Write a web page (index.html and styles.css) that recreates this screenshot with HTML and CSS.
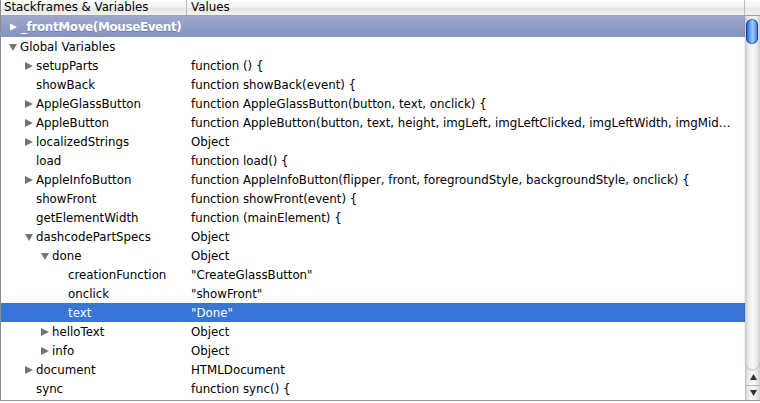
FILE: index.html
```html
<!DOCTYPE html>
<html>
<head>
<meta charset="utf-8">
<link rel="stylesheet" href="styles.css">
</head>
<body>
<div class="panel">
  <div class="header">
    <div class="hcell hname">Stackframes &amp; Variables</div>
    <div class="hcell hvalue">Values</div>
    <div class="hcell hcorner"></div>
  </div>
  <div class="body">
    <div class="list">
      <div class="frame"><svg class="ftri" viewBox="0 0 8 8"><path d="M0 0L8 4L0 8Z"/></svg>_frontMove(MouseEvent)</div>
      <div class="row l0"><span class="name"><svg class="tri" viewBox="0 0 8 8"><path d="M0 1H8L4 8Z"/></svg>Global Variables</span><span class="val"></span></div>
      <div class="row l1"><span class="name"><svg class="tri" viewBox="0 0 8 8"><path d="M0 0L8 4L0 8Z"/></svg>setupParts</span><span class="val">function () {</span></div>
      <div class="row l1"><span class="name"><span class="sp"></span>showBack</span><span class="val">function showBack(event) {</span></div>
      <div class="row l1"><span class="name"><svg class="tri" viewBox="0 0 8 8"><path d="M0 0L8 4L0 8Z"/></svg>AppleGlassButton</span><span class="val">function AppleGlassButton(button, text, onclick) {</span></div>
      <div class="row l1"><span class="name"><svg class="tri" viewBox="0 0 8 8"><path d="M0 0L8 4L0 8Z"/></svg>AppleButton</span><span class="val">function AppleButton(button, text, height, imgLeft, imgLeftClicked, imgLeftWidth, imgMiddle, imgMiddleClicked, imgRight, imgRightClicked, imgRightWidth, onclick) {</span></div>
      <div class="row l1"><span class="name"><svg class="tri" viewBox="0 0 8 8"><path d="M0 0L8 4L0 8Z"/></svg>localizedStrings</span><span class="val">Object</span></div>
      <div class="row l1"><span class="name"><span class="sp"></span>load</span><span class="val">function load() {</span></div>
      <div class="row l1"><span class="name"><svg class="tri" viewBox="0 0 8 8"><path d="M0 0L8 4L0 8Z"/></svg>AppleInfoButton</span><span class="val">function AppleInfoButton(flipper, front, foregroundStyle, backgroundStyle, onclick) {</span></div>
      <div class="row l1"><span class="name"><span class="sp"></span>showFront</span><span class="val">function showFront(event) {</span></div>
      <div class="row l1"><span class="name"><span class="sp"></span>getElementWidth</span><span class="val">function (mainElement) {</span></div>
      <div class="row l1"><span class="name"><svg class="tri" viewBox="0 0 8 8"><path d="M0 1H8L4 8Z"/></svg>dashcodePartSpecs</span><span class="val">Object</span></div>
      <div class="row l2"><span class="name"><svg class="tri" viewBox="0 0 8 8"><path d="M0 1H8L4 8Z"/></svg>done</span><span class="val">Object</span></div>
      <div class="row l3"><span class="name"><span class="sp"></span>creationFunction</span><span class="val">"CreateGlassButton"</span></div>
      <div class="row l3"><span class="name"><span class="sp"></span>onclick</span><span class="val">"showFront"</span></div>
      <div class="row l3 selected"><span class="name"><span class="sp"></span>text</span><span class="val">"Done"</span></div>
      <div class="row l2"><span class="name"><svg class="tri" viewBox="0 0 8 8"><path d="M0 0L8 4L0 8Z"/></svg>helloText</span><span class="val">Object</span></div>
      <div class="row l2"><span class="name"><svg class="tri" viewBox="0 0 8 8"><path d="M0 0L8 4L0 8Z"/></svg>info</span><span class="val">Object</span></div>
      <div class="row l1"><span class="name"><svg class="tri" viewBox="0 0 8 8"><path d="M0 0L8 4L0 8Z"/></svg>document</span><span class="val">HTMLDocument</span></div>
      <div class="row l1"><span class="name"><span class="sp"></span>sync</span><span class="val">function sync() {</span></div>
    </div>
    <div class="scrollbar">
      <div class="track">
        <div class="thumb"></div>
      </div>
      <div class="arrow up"><svg viewBox="0 0 7 6"><path d="M3.5 0L7 6H0Z"/></svg></div>
      <div class="arrow down"><svg viewBox="0 0 7 6"><path d="M0 0H7L3.5 6Z"/></svg></div>
    </div>
  </div>
</div>
</body>
</html>
```
FILE: styles.css
```css
html, body {
  margin: 0;
  padding: 0;
  background: #fff;
}
body {
  font-family: "DejaVu Sans", "Liberation Sans", sans-serif;
  font-size: 11.8px;
  color: #000;
}
.panel {
  width: 760px;
  height: 401px;
  display: flex;
  flex-direction: column;
  box-sizing: border-box;
  border-left: 1px solid #8c8c8c;
  border-bottom: 1px solid #9a9a9a;
  overflow: hidden;
}
.header {
  height: 15px;
  display: grid;
  grid-template-columns: 186px 1fr 15px;
  background: linear-gradient(#ffffff, #f4f4f4 45%, #e6e6e6 55%, #f2f2f2);
  border-bottom: 1px solid #a5a5a5;
  flex: none;
}
.hcell {
  line-height: 15px;
  font-size: 11.8px;
  padding-left: 3px;
  white-space: nowrap;
  overflow: hidden;
}
.hname, .hvalue {
  border-right: 1px solid #bcbcbc;
}
.hvalue {
  padding-left: 4px;
}
.hcorner {
  padding: 0;
}
.body {
  flex: 1;
  display: flex;
  min-height: 0;
}
.list {
  flex: 1;
  min-width: 0;
  display: flex;
  flex-direction: column;
}
.frame {
  height: 21px;
  flex: none;
  display: flex;
  align-items: center;
  background: linear-gradient(#9ca8cc, #8592c0);
  color: #fff;
  font-weight: bold;
  font-size: 12px;
  letter-spacing: -0.4px;
  padding-left: 9px;
  white-space: nowrap;
  text-shadow: 0 1px 0 rgba(60,70,110,0.35);
}
.ftri {
  width: 7px;
  height: 8px;
  fill: #fff;
  margin-right: 4px;
  flex: none;
}
.row {
  height: 19px;
  flex: none;
  display: grid;
  grid-template-columns: 190px 1fr;
  align-items: center;
  white-space: nowrap;
}
.row .name {
  display: flex;
  align-items: center;
  overflow: hidden;
}
.row .val {
  overflow: hidden;
  text-overflow: ellipsis;
  padding-right: 8px;
}
.tri, .sp {
  width: 8px;
  height: 8px;
  flex: none;
  margin-right: 3px;
}
.tri {
  fill: #747474;
}
.l0 .name { padding-left: 8px; }
.l1 .name { padding-left: 24px; }
.l2 .name { padding-left: 40px; }
.l3 .name { padding-left: 56px; }
.selected {
  background: #3875d7;
  color: #fff;
}
.scrollbar {
  width: 15px;
  flex: none;
  display: flex;
  flex-direction: column;
  background: linear-gradient(90deg, #c9c9c9, #ededed 25%, #fafafa 55%, #e2e2e2 85%, #cfcfcf);
}
.track {
  flex: 1;
  position: relative;
  background: linear-gradient(90deg, #c9c9c9, #ededed 25%, #fafafa 55%, #e2e2e2 85%, #cfcfcf);
  border-bottom-left-radius: 7px 9px;
  border-bottom-right-radius: 7px 9px;
  box-shadow: 0 1px 2px rgba(0,0,0,0.25);
}
.thumb {
  position: absolute;
  left: 1px;
  top: 3px;
  width: 12px;
  height: 25px;
  border-radius: 6px;
  background: linear-gradient(90deg, #1b4fb0, #4d8ff0 25%, #9fcbff 55%, #5c9bf0 80%, #2a5fc0);
  box-shadow: inset 0 0 0 1px rgba(20,50,130,0.6);
}
.arrow {
  height: 16px;
  flex: none;
  display: flex;
  align-items: center;
  justify-content: center;
  border-left: 1px solid #c4c4c4;
}
.arrow svg {
  width: 7px;
  height: 6px;
  fill: #333;
}
.arrow.up {
  border-bottom: 1px solid #b8b8b8;
  height: 16px;
}
.arrow.down {
  height: 14px;
}
```
